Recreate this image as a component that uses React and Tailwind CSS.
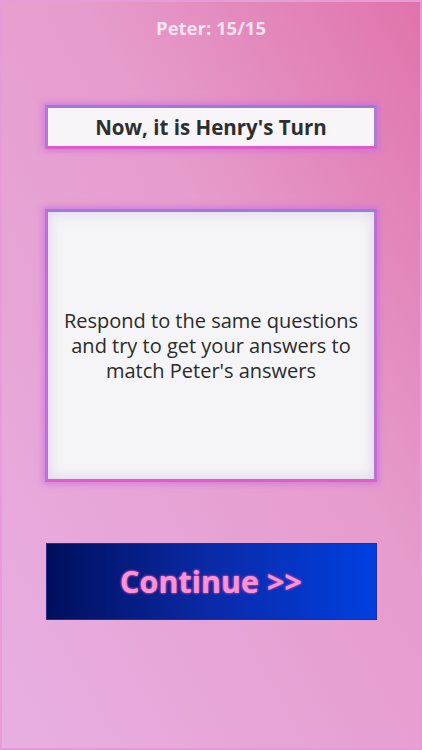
export default function App() {
  return (
    <div
      className="w-[422px] h-[750px] flex flex-col items-center border-2 border-[#e79bd8] bg-[linear-gradient(240deg,#e074ab_0%,#e69ccc_40%,#e8afe3_100%)]"
      style={{ fontFamily: '"Open Sans", "Noto Sans", sans-serif' }}
    >
      <p className="mt-[14px] text-[18.5px] leading-6 font-bold text-white/75">Peter: 15/15</p>

      <div className="mt-[65px] w-[332px] h-[44px] flex items-center justify-center bg-[#f7f5f8] border-[3px] border-t-[#9b7bd6] border-x-[#b27ad6] border-b-[#e25bc4] shadow-[0_0_6px_2px_rgba(200,110,230,0.7)]">
        <span className="text-[20.5px] font-bold text-[#2e2e2e]">Now, it is Henry's Turn</span>
      </div>

      <div className="mt-[60px] w-[332px] h-[273px] flex items-center justify-center px-2 bg-[#f5f4f6] border-[3px] border-t-[#9d7bd8] border-x-[#c070d4] border-b-[#e55cc2] shadow-[0_0_6px_2px_rgba(200,110,230,0.7),inset_0_0_14px_rgba(190,170,220,0.45)]">
        <p className="text-center text-[20px] leading-[25px] text-[#2b2b2b]">
          Respond to the same questions and try to get your answers to match Peter's answers
        </p>
      </div>

      <button className="mt-[61px] w-[331px] h-[77px] flex items-center justify-center bg-[linear-gradient(90deg,#000f5c_0%,#0a2aa8_50%,#003fe0_100%)] border border-[#2a2a90]">
        <span className="text-[30.5px] font-bold text-[#f595d2] [text-shadow:0_0_2px_#e050b8,0_0_3px_#d040a8]">
          Continue &gt;&gt;
        </span>
      </button>
    </div>
  )
}
